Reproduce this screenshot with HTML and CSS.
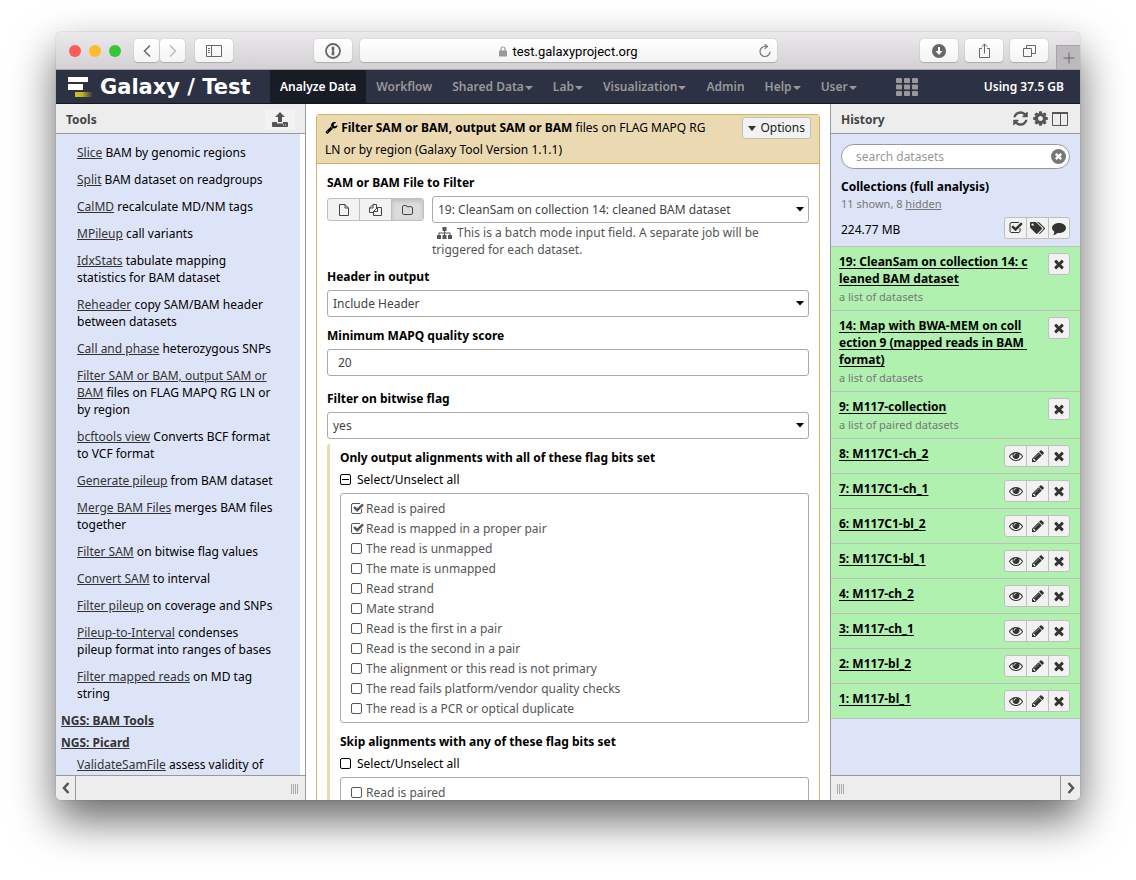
FILE: index.html
```html
<!DOCTYPE html>
<html lang="en">
<head>
<meta charset="utf-8">
<title>Galaxy / Test</title>
<link rel="stylesheet" href="styles.css">
</head>
<body>
<svg class="sprite" aria-hidden="true">
  <symbol id="times" viewBox="0 0 1792 1792"><path d="M1490 1322q0 40-28 68l-136 136q-28 28-68 28t-68-28l-294-294-294 294q-28 28-68 28t-68-28l-136-136q-28-28-28-68t28-68l294-294-294-294q-28-28-28-68t28-68l136-136q28-28 68-28t68 28l294 294 294-294q28-28 68-28t68 28l136 136q28 28 28 68t-28 68l-294 294 294 294q28 28 28 68z"/></symbol>
  <symbol id="pencil" viewBox="0 0 1792 1792"><path d="M491 1536l91-91-235-235-91 91v107h128v128h107zm523-928q0-22-22-22-10 0-17 7l-542 542q-7 7-7 17 0 22 22 22 10 0 17-7l542-542q7-7 7-17zm-54-192l416 416-832 832h-416v-416zm683 96q0 53-37 90l-166 166-416-416 166-165q36-38 90-38 53 0 91 38l235 234q37 39 37 91z"/></symbol>
  <symbol id="eye" viewBox="0 0 1792 1792"><path d="M1664 960q-152-236-381-353 61 104 61 225 0 185-131.5 316.5t-316.5 131.5-316.5-131.5-131.5-316.5q0-121 61-225-229 117-381 353 133 205 333.5 326.5t434.5 121.5 434.5-121.5 333.5-326.5zm-720-384q0-20-14-34t-34-14q-125 0-214.5 89.5t-89.5 214.5q0 20 14 34t34 14 34-14 14-34q0-86 61-147t147-61q20 0 34-14t14-34zm848 384q0 34-20 69-140 230-376.5 368.5t-499.5 138.5-499.5-139-376.5-368q-20-35-20-69t20-69q140-229 376.5-368t499.5-139 499.5 139 376.5 368q20 35 20 69z"/></symbol>
  <symbol id="cog" viewBox="0 0 1792 1792"><path d="M1152 896q0-106-75-181t-181-75-181 75-75 181 75 181 181 75 181-75 75-181zm512-109v222q0 12-8 23t-20 13l-185 28q-19 54-39 91 35 50 107 138 10 12 10 25t-9 23q-27 37-99 108t-94 71q-12 0-26-9l-138-108q-44 23-91 38-16 136-29 186-7 28-36 28h-222q-14 0-24.5-8.5t-11.5-21.5l-28-184q-49-16-90-37l-141 107q-10 9-25 9-14 0-25-11-126-114-165-168-7-10-7-23 0-12 8-23 15-21 51-66.5t54-70.5q-27-50-41-99l-183-27q-13-2-21-12.5t-8-23.5v-222q0-12 8-23t19-13l186-28q14-46 39-92-40-57-107-138-10-12-10-24 0-10 9-23 26-36 98.5-107.5t94.5-71.5q13 0 26 10l138 107q44-23 91-38 16-136 29-186 7-28 36-28h222q14 0 24.5 8.5t11.5 21.5l28 184q49 16 90 37l142-107q9-9 24-9 13 0 25 10 129 119 165 170 7 8 7 22 0 12-8 23-15 21-51 66.5t-54 70.5q26 50 41 98l183 28q13 2 21 12.5t8 23.5z"/></symbol>
  <symbol id="refresh" viewBox="0 0 1792 1792"><path d="M1639 1056q0 5-1 7-64 268-268 434.5t-478 166.5q-146 0-282.5-55t-243.5-157l-129 129q-19 19-45 19t-45-19-19-45v-448q0-26 19-45t45-19h448q26 0 45 19t19 45-19 45l-137 137q71 66 161 102t187 36q134 0 250-65t186-179q11-17 53-117 8-23 30-23h192q13 0 22.5 9.5t9.5 22.5zm25-800v448q0 26-19 45t-45 19h-448q-26 0-45-19t-19-45 19-45l138-138q-148-137-349-137-134 0-250 65t-186 179q-11 17-53 117-8 23-30 23h-199q-13 0-22.5-9.5t-9.5-22.5v-7q65-268 270-434.5t480-166.5q146 0 284 55.5t245 156.5l130-129q19-19 45-19t45 19 19 45z"/></symbol>
  <symbol id="wrench" viewBox="0 0 1792 1792"><path d="M448 1472q0-26-19-45t-45-19-45 19-19 45 19 45 45 19 45-19 19-45zm644-420l-682 682q-37 37-90 37-52 0-91-37l-106-108q-38-36-38-90 0-53 38-91l681-681q39 98 114.5 173.5t173.5 114.5zm634-435q0 39-23 106-47 134-164.5 217.5t-258.5 83.5q-185 0-316.5-131.5t-131.5-316.5 131.5-316.5 316.5-131.5q58 0 121.5 16.5t107.5 46.5q16 11 16 28t-16 28l-293 169v224l193 107q5-3 79-48.5t135.5-81 70.5-35.5q15 0 23.5 10t8.5 25z"/></symbol>
  <symbol id="check" viewBox="0 0 1792 1792"><path d="M1472 930v318q0 119-84.5 203.5t-203.5 84.5h-832q-119 0-203.5-84.5t-84.5-203.5v-832q0-119 84.5-203.5t203.5-84.5h832q63 0 117 25 15 7 18 23 3 17-9 29l-49 49q-10 10-23 10-3 0-9-2-23-6-45-6h-832q-66 0-113 47t-47 113v832q0 66 47 113t113 47h832q66 0 113-47t47-113v-254q0-13 9-22l64-64q10-10 23-10 6 0 12 3 20 8 20 29zm231-489l-814 814q-24 24-57 24t-57-24l-430-430q-24-24-24-57t24-57l110-110q24-24 57-24t57 24l263 263 647-647q24-24 57-24t57 24l110 110q24 24 24 57t-24 57z"/></symbol>
</svg>

<div class="window">
  <header class="titlebar">
    <div class="lights"><i class="light red"></i><i class="light yellow"></i><i class="light green"></i></div>
    <div class="pair">
      <button class="tb half" aria-label="Back"><svg width="12" height="14" viewBox="0 0 12 14"><path d="M9 1.500 3.500 7 9 12.500" fill="none" stroke="#666" stroke-width="1.500"/></svg></button>
      <button class="tb half" aria-label="Forward"><svg width="12" height="14" viewBox="0 0 12 14"><path d="M3 1.500 8.500 7 3 12.500" fill="none" stroke="#bbb" stroke-width="1.500"/></svg></button>
    </div>
    <button class="tb" aria-label="Sidebar"><svg width="16" height="12" viewBox="0 0 16 12" fill="none" stroke="#666"><path d="M.5.5h15v11H.5zM5.500.5v11M2 3.500h2M2 5.500h2M2 7.500h2"/></svg></button>
    <button class="tb password" aria-label="Password manager"><svg width="16" height="16" viewBox="0 0 16 16"><circle cx="8" cy="8" r="7" fill="none" stroke="#666" stroke-width="1.800"/><path d="M6.700 3.800h2.600v3.400l-.8.8.8.8v3.400H6.700V8.800l.8-.8-.8-.8z" fill="#666"/></svg></button>
    <div class="address">
      <span class="url"><svg width="8" height="11" viewBox="0 0 8 11"><path d="M2 5V3a2 2 0 0 1 4 0v2" fill="none" stroke="#999" stroke-width="1.200"/><rect y="4.500" width="8" height="6" rx=".8" fill="#999"/></svg>test.galaxyproject.org</span>
      <svg class="reload" width="14" height="14" viewBox="0 0 14 14"><path d="M12 7.500A5 5 0 1 1 7 2.500h2" fill="none" stroke="#777" stroke-width="1.200"/><path d="M6.500.2 9.500 2.500 6.500 4.900" fill="none" stroke="#777" stroke-width="1.200"/></svg>
    </div>
    <div class="tb-right">
      <button class="tb" aria-label="Downloads"><svg width="14" height="14" viewBox="0 0 14 14"><circle cx="7" cy="7" r="7" fill="#666"/><path d="M6 3h2v4h2.500L7 11 3.500 7H6z" fill="#fff"/></svg></button>
      <button class="tb" aria-label="Share"><svg width="13" height="16" viewBox="0 0 13 16" fill="none" stroke="#666"><path d="M4 5.500H1.500v9h10v-9H9M6.500 10.500V1M3.700 3.800 6.500 1l2.800 2.800"/></svg></button>
      <button class="tb" aria-label="Show tabs"><svg width="13" height="13" viewBox="0 0 13 13" fill="none" stroke="#666"><path d="M.5 4.500h8v8h-8zM3.500 4.500v-3h9v8h-4"/></svg></button>
    </div>
    <button class="newtab" aria-label="New tab"><svg width="12" height="12" viewBox="0 0 12 12"><path d="M6 .5v11M.5 6h11" stroke="#666"/></svg></button>
  </header>

  <nav class="masthead">
    <a class="brand" href="#"><svg width="25" height="20" viewBox="0 0 25 20"><defs><linearGradient id="gold"><stop offset="0" stop-color="#d8c11c"/><stop offset=".4" stop-color="#c4ae22"/><stop offset="1" stop-color="#2c3143"/></linearGradient></defs><path d="M0 0h20v5H0zM0 7h15v6H0z" fill="#fff"/><path d="M7 15h18v5H7z" fill="url(#gold)"/></svg>Galaxy / Test</a>
    <a class="item active" href="#">Analyze Data</a>
    <a class="item" href="#">Workflow</a>
    <a class="item caret" href="#">Shared Data</a>
    <a class="item caret" href="#">Lab</a>
    <a class="item caret" href="#">Visualization</a>
    <a class="item" href="#">Admin</a>
    <a class="item caret" href="#">Help</a>
    <a class="item caret" href="#">User</a>
    <a class="apps" href="#" aria-label="Applications"><svg width="22" height="18" viewBox="0 0 22 18" fill="#999"><rect width="6" height="5" rx="1"/><rect x="8" width="6" height="5" rx="1"/><rect x="16" width="6" height="5" rx="1"/><rect y="6.500" width="6" height="5" rx="1"/><rect x="8" y="6.500" width="6" height="5" rx="1"/><rect x="16" y="6.500" width="6" height="5" rx="1"/><rect y="13" width="6" height="5" rx="1"/><rect x="8" y="13" width="6" height="5" rx="1"/><rect x="16" y="13" width="6" height="5" rx="1"/></svg></a>
    <span class="quota">Using 37.5 GB</span>
  </nav>

  <div class="columns">
    <aside class="panel tools">
      <div class="panel-head"><h2>Tools</h2><button class="upload" aria-label="Upload"><svg width="16" height="15" viewBox="0 0 16 15" fill="#555"><path d="M8 0l5 5h-3v5H6V5H3z"/><path d="M0 11q0-1 1-1h4v1.500h6V10h4q1 0 1 1v3q0 1-1 1H1q-1 0-1-1z"/><path d="M11 12.500h1v1h-1zM13 12.500h1v1h-1z" fill="#eee"/></svg></button></div>
      <div class="tool-list">
        <p><a href="#">Slice</a> BAM by genomic regions</p>
        <p><a href="#">Split</a> BAM dataset on readgroups</p>
        <p><a href="#">CalMD</a> recalculate MD/NM tags</p>
        <p><a href="#">MPileup</a> call variants</p>
        <p><a href="#">IdxStats</a> tabulate mapping<br>statistics for BAM dataset</p>
        <p><a href="#">Reheader</a> copy SAM/BAM header<br>between datasets</p>
        <p><a href="#">Call and phase</a> heterozygous SNPs</p>
        <p><a href="#">Filter SAM or BAM, output SAM or<br>BAM</a> files on FLAG MAPQ RG LN or<br>by region</p>
        <p><a href="#">bcftools view</a> Converts BCF format<br>to VCF format</p>
        <p><a href="#">Generate pileup</a> from BAM dataset</p>
        <p><a href="#">Merge BAM Files</a> merges BAM files<br>together</p>
        <p><a href="#">Filter SAM</a> on bitwise flag values</p>
        <p><a href="#">Convert SAM</a> to interval</p>
        <p><a href="#">Filter pileup</a> on coverage and SNPs</p>
        <p><a href="#">Pileup-to-Interval</a> condenses<br>pileup format into ranges of bases</p>
        <p><a href="#">Filter mapped reads</a> on MD tag<br>string</p>
        <h3><a href="#">NGS: BAM Tools</a></h3>
        <h3><a href="#">NGS: Picard</a></h3>
        <p><a href="#">ValidateSamFile</a> assess validity of</p>
      </div>
      <div class="panel-foot"><button class="collapse" aria-label="Collapse tools"><svg width="8" height="12" viewBox="0 0 8 12"><path d="M6.500 1 2 6l4.500 5" fill="none" stroke="#555" stroke-width="2.500"/></svg></button><i class="grip"></i></div>
    </aside>

    <main class="center">
      <form class="tool-form">
        <div class="form-head">
          <button type="button" class="options">Options</button>
          <svg class="wrench" width="13" height="13"><use href="#wrench"/></svg>
          <b>Filter SAM or BAM, output SAM or BAM</b> files on FLAG MAPQ RG<br>LN or by region (Galaxy Tool Version 1.1.1)
        </div>
        <div class="form-body">
          <div class="field">
            <label for="input-file">SAM or BAM File to Filter</label>
            <div class="data-row">
              <div class="group sources">
                <button type="button" aria-label="Single dataset"><svg width="10" height="12" viewBox="0 0 10 12" fill="none" stroke="#444"><path d="M.5.5h5.500l3.500 3.500v7.500h-9zM6 .5V4h3.500"/></svg></button>
                <button type="button" aria-label="Multiple datasets"><svg width="13" height="12" viewBox="0 0 13 12" fill="none" stroke="#444"><path d="M4.500 8.500h-4V4L4 .5h3.500V4M4 .5V4H.5M4.500 11.500V7.500L8.500 3.500h4v8zM8.500 3.500v4h-4"/></svg></button>
                <button type="button" class="pressed" aria-label="Dataset collection"><svg width="11" height="10" viewBox="0 0 11 10" fill="none" stroke="#444"><path d="M.5 2q0-1.500 1.200-1.500h2.200q1 0 1 1.200h4.400q1.200 0 1.200 1.300v5q0 1.500-1.200 1.500H1.700Q.5 9.500.5 8z"/></svg></button>
              </div>
              <div class="data-select">
                <select id="input-file"><option>19: CleanSam on collection 14: cleaned BAM dataset</option></select>
                <p class="hint"><svg width="15" height="12" viewBox="0 0 15 12" fill="#555"><path d="M5.500 0h4v4H8v1.500h5.500V8H15v4h-4V8h1.500V6.500H8V8h1.500v4h-4V8H7V6.500H2.500V8H4v4H0V8h1.500V5.500H7V4H5.500z"/></svg>This is a batch mode input field. A separate job will be<br>triggered for each dataset.</p>
              </div>
            </div>
          </div>
          <div class="field">
            <label for="header">Header in output</label>
            <select id="header"><option>Include Header</option></select>
          </div>
          <div class="field">
            <label for="mapq">Minimum MAPQ quality score</label>
            <input type="text" id="mapq" value="20">
          </div>
          <div class="field spaced">
            <label for="bitwise">Filter on bitwise flag</label>
            <select id="bitwise"><option>yes</option></select>
          </div>
          <div class="nested">
            <div class="field">
              <h4>Only output alignments with all of these flag bits set</h4>
              <label class="all"><input type="checkbox" class="partial">Select/Unselect all</label>
              <div class="flags">
                <label><input type="checkbox" checked>Read is paired</label>
                <label><input type="checkbox" checked>Read is mapped in a proper pair</label>
                <label><input type="checkbox">The read is unmapped</label>
                <label><input type="checkbox">The mate is unmapped</label>
                <label><input type="checkbox">Read strand</label>
                <label><input type="checkbox">Mate strand</label>
                <label><input type="checkbox">Read is the first in a pair</label>
                <label><input type="checkbox">Read is the second in a pair</label>
                <label><input type="checkbox">The alignment or this read is not primary</label>
                <label><input type="checkbox">The read fails platform/vendor quality checks</label>
                <label><input type="checkbox">The read is a PCR or optical duplicate</label>
              </div>
            </div>
            <div class="field">
              <h4>Skip alignments with any of these flag bits set</h4>
              <label class="all"><input type="checkbox">Select/Unselect all</label>
              <div class="flags">
                <label><input type="checkbox">Read is paired</label>
              </div>
            </div>
          </div>
        </div>
      </form>
    </main>

    <aside class="panel history">
      <div class="panel-head"><h2>History</h2>
        <div class="head-icons">
          <button aria-label="Refresh history"><svg width="17" height="17"><use href="#refresh"/></svg></button>
          <button aria-label="History options"><svg width="17" height="17"><use href="#cog"/></svg></button>
          <button aria-label="View all histories"><svg width="16" height="14" viewBox="0 0 16 14" fill="none" stroke="#555"><path d="M.5.5h15v13H.5zM8.500 1v12"/><path d="M0 1h16" stroke-width="2"/></svg></button>
        </div>
      </div>
      <div class="history-body">
        <div class="history-info">
          <div class="search"><input type="text" placeholder="search datasets" aria-label="search datasets"><svg width="15" height="15" viewBox="0 0 15 15"><circle cx="7.500" cy="7.500" r="7.500" fill="#777"/><path d="M4.800 4.800l5.400 5.400M10.200 4.800l-5.400 5.400" stroke="#fff" stroke-width="2.400"/></svg></div>
          <h3>Collections (full analysis)</h3>
          <p class="sub">11 shown, 8 <a href="#">hidden</a></p>
          <div class="size-row"><span>224.77 MB</span>
            <div class="group">
              <button aria-label="Select datasets"><svg width="14" height="14"><use href="#check"/></svg></button>
              <button aria-label="Edit tags"><svg width="15" height="13" viewBox="0 0 15 13" fill="#333"><path fill-rule="evenodd" d="M0 1q0-1 1-1h4q1 0 1.700.7l5 5q.8.8 0 1.600l-4.200 4.200q-.8.7-1.600 0l-5.200-5.200Q0 5.600 0 4.800zM2.600 1.400a1.200 1.200 0 1 0 0 2.400 1.200 1.200 0 0 0 0-2.400z"/><path d="M7 0h1q.9 0 1.600.7l5 5q.8.8 0 1.600l-4.200 4.200q-.7.7-1.500.2l4.300-4.500q.6-.7 0-1.500z"/></svg></button>
              <button aria-label="Annotate"><svg width="14" height="13" viewBox="0 0 14 13" fill="#333"><path d="M7 1c4 0 7 2.200 7 5s-3 5-7 5l-1.500-.1Q3.700 12.700 1 13q1.400-1.500 1.300-3.200Q0 8.300 0 6c0-2.800 3-5 7-5z"/></svg></button>
            </div>
          </div>
        </div>
        <div class="dataset"><div class="text"><a href="#">19: CleanSam on collection 14: c<br>leaned BAM dataset</a><p class="sub">a list of datasets</p></div><div class="group"><button aria-label="Delete"><svg width="14" height="14"><use href="#times"/></svg></button></div></div>
        <div class="dataset"><div class="text"><a href="#">14: Map with BWA-MEM on coll<br>ection 9 (mapped reads in BAM&nbsp;<br>format)</a><p class="sub">a list of datasets</p></div><div class="group"><button aria-label="Delete"><svg width="14" height="14"><use href="#times"/></svg></button></div></div>
        <div class="dataset"><div class="text"><a href="#">9: M117-collection</a><p class="sub">a list of paired datasets</p></div><div class="group"><button aria-label="Delete"><svg width="14" height="14"><use href="#times"/></svg></button></div></div>
        <div class="dataset"><div class="text"><a href="#">8: M117C1-ch_2</a></div><div class="group"><button aria-label="View"><svg width="14" height="14"><use href="#eye"/></svg></button><button aria-label="Edit"><svg width="14" height="14"><use href="#pencil"/></svg></button><button aria-label="Delete"><svg width="14" height="14"><use href="#times"/></svg></button></div></div>
        <div class="dataset"><div class="text"><a href="#">7: M117C1-ch_1</a></div><div class="group"><button aria-label="View"><svg width="14" height="14"><use href="#eye"/></svg></button><button aria-label="Edit"><svg width="14" height="14"><use href="#pencil"/></svg></button><button aria-label="Delete"><svg width="14" height="14"><use href="#times"/></svg></button></div></div>
        <div class="dataset"><div class="text"><a href="#">6: M117C1-bl_2</a></div><div class="group"><button aria-label="View"><svg width="14" height="14"><use href="#eye"/></svg></button><button aria-label="Edit"><svg width="14" height="14"><use href="#pencil"/></svg></button><button aria-label="Delete"><svg width="14" height="14"><use href="#times"/></svg></button></div></div>
        <div class="dataset"><div class="text"><a href="#">5: M117C1-bl_1</a></div><div class="group"><button aria-label="View"><svg width="14" height="14"><use href="#eye"/></svg></button><button aria-label="Edit"><svg width="14" height="14"><use href="#pencil"/></svg></button><button aria-label="Delete"><svg width="14" height="14"><use href="#times"/></svg></button></div></div>
        <div class="dataset"><div class="text"><a href="#">4: M117-ch_2</a></div><div class="group"><button aria-label="View"><svg width="14" height="14"><use href="#eye"/></svg></button><button aria-label="Edit"><svg width="14" height="14"><use href="#pencil"/></svg></button><button aria-label="Delete"><svg width="14" height="14"><use href="#times"/></svg></button></div></div>
        <div class="dataset"><div class="text"><a href="#">3: M117-ch_1</a></div><div class="group"><button aria-label="View"><svg width="14" height="14"><use href="#eye"/></svg></button><button aria-label="Edit"><svg width="14" height="14"><use href="#pencil"/></svg></button><button aria-label="Delete"><svg width="14" height="14"><use href="#times"/></svg></button></div></div>
        <div class="dataset"><div class="text"><a href="#">2: M117-bl_2</a></div><div class="group"><button aria-label="View"><svg width="14" height="14"><use href="#eye"/></svg></button><button aria-label="Edit"><svg width="14" height="14"><use href="#pencil"/></svg></button><button aria-label="Delete"><svg width="14" height="14"><use href="#times"/></svg></button></div></div>
        <div class="dataset"><div class="text"><a href="#">1: M117-bl_1</a></div><div class="group"><button aria-label="View"><svg width="14" height="14"><use href="#eye"/></svg></button><button aria-label="Edit"><svg width="14" height="14"><use href="#pencil"/></svg></button><button aria-label="Delete"><svg width="14" height="14"><use href="#times"/></svg></button></div></div>
      </div>
      <div class="panel-foot"><i class="grip"></i><button class="collapse" aria-label="Collapse history"><svg width="8" height="12" viewBox="0 0 8 12"><path d="M1.500 1 6 6l-4.500 5" fill="none" stroke="#555" stroke-width="2.500"/></svg></button></div>
    </aside>
  </div>
</div>
</body>
</html>
```
FILE: styles.css
```css
* { box-sizing: border-box; }
body, h2, h3, h4, p { margin: 0; font-size: inherit; }
body {
  height: 100vh;
  padding: 32px 56px 80px;
  display: flex;
  overflow: hidden;
  background: #fff;
  color: #000;
  font: 12px/17px "Noto Sans", sans-serif;
}
button, input, select { font: inherit; color: inherit; margin: 0; }
button { padding: 0; border: 0; background: none; display: flex; align-items: center; justify-content: center; }
svg { flex: none; }
.sprite { display: none; }

.window {
  flex: 1;
  min-width: 0;
  display: flex;
  flex-direction: column;
  overflow: hidden;
  border-radius: 5px;
  background: #fff;
  box-shadow: 0 0 1px rgba(0, 0, 0, .5), 0 20px 44px rgba(0, 0, 0, .6);
}

/* Browser toolbar */
.titlebar {
  flex: none;
  height: 38px;
  display: flex;
  align-items: center;
  padding-left: 13px;
  gap: 8px;
  background: linear-gradient(#ebe9eb, #d3d1d3);
  border-bottom: 1px solid #a6a4a6;
}
.lights { display: flex; gap: 8px; margin-right: 5px; }
.light { width: 12px; height: 12px; border-radius: 50%; }
.red { background: #fc5b57; }
.yellow { background: #fdbc2e; }
.green { background: #34c63b; }
.pair, .tb-right { display: flex; gap: 1px; }
.pair { margin-right: 2px; }
.tb-right { gap: 7px; margin-left: 135px; }
.tb {
  width: 38px;
  height: 23px;
  border-radius: 4px;
  background: linear-gradient(#fff, #f4f4f4);
  box-shadow: 0 0 1px #999, 0 1px 1px #b0b0b0;
}
.half { width: 25px; }
.password { margin-left: 73px; }
.address {
  flex: 1;
  height: 23px;
  display: flex;
  align-items: center;
  padding: 0 5px 0 19px;
  border-radius: 4px;
  background: linear-gradient(#fff, #f4f4f4);
  box-shadow: 0 0 1px #999, 0 1px 1px #b0b0b0;
  font: 13px/17px Roboto, sans-serif;
}
.url { flex: 1; display: flex; align-items: center; justify-content: center; gap: 5px; margin-top: 1px; }
.newtab { align-self: flex-end; width: 24px; height: 24px; background: #bcbabc; border: 1px solid #a6a4a6; border-width: 1px 0 0 1px; }

/* Masthead */
.masthead {
  flex: none;
  height: 34px;
  display: flex;
  align-items: stretch;
  background: #2c3143;
  border-bottom: 1px solid #15171f;
  color: #999;
  font-weight: 600;
}
.masthead a { color: inherit; text-decoration: none; display: flex; align-items: center; }
.masthead .brand { width: 214px; padding-left: 12px; gap: 7px; color: #fff; font: bold 21px/24px "DejaVu Sans", sans-serif; white-space: nowrap; }
.masthead .item { padding: 0 10px; white-space: nowrap; }
.masthead .active { background: #191b25; color: #fff; }
.caret::after { content: ""; margin: 2px 0 0 1px; border: 4px solid transparent; border-top-color: #999; border-bottom: 0; }
.masthead .apps { margin-left: 29px; }
.quota { margin-left: auto; padding-right: 16px; align-self: center; color: #fff; }

/* Columns */
.columns { flex: 1; min-height: 0; display: grid; grid-template-columns: 250px minmax(0, 1fr) 250px; }
.panel { display: flex; flex-direction: column; min-height: 0; }
.tools { border-right: 1px solid #999; }
.history { border-left: 1px solid #999; }
.panel-head {
  flex: none;
  height: 30px;
  display: flex;
  align-items: center;
  justify-content: space-between;
  padding: 2px 10px 0;
  background: #ededed;
  border-bottom: 1px solid #999;
  color: #444;
}
.head-icons { display: flex; gap: 3px; margin: 0 2px 2px 0; fill: #555; }
.upload { width: 30px; height: 21px; border-radius: 3px; background: #f2f2f2; }
.panel-foot { flex: none; height: 25px; display: flex; align-items: center; justify-content: space-between; background: #ededed; border-top: 1px solid #999; }
.collapse { width: 20px; height: 24px; border: 0 solid #999; }
.tools .collapse { border-right-width: 1px; }
.history .collapse { border-left-width: 1px; }
.grip { width: 8px; height: 10px; margin: 2px 6px 0; background: repeating-linear-gradient(90deg, #aaa 0 1px, transparent 1px 2px); }

.tool-list { flex: 1; min-height: 0; overflow: hidden; margin-right: 5px; padding: 10px 0 0 5px; background: #dee4f7; white-space: nowrap; }
.tool-list a { color: #333; }
.tool-list p { padding-left: 16px; margin-bottom: 10px; }
.tool-list h3 { margin-bottom: 5px; }

/* Tool form */
.center { min-height: 0; overflow: hidden; padding: 10px 10px 0; }
.tool-form { border: 1px solid #d6b161; border-radius: 3px; }
.form-head { padding: 2px 8px; background: #ebd9b2; border-bottom: 1px solid #d6b161; line-height: 22px; }
.wrench { vertical-align: -2px; }
.options { float: right; height: 22px; padding: 0 5px; gap: 4px; background: #f2f2f2; border: 1px solid #bfbfbf; border-radius: 3px; color: #222; }
.options::before { content: ""; border: 4px solid transparent; border-top: 5px solid #333; border-bottom: 0; }
.form-body { padding: 10px; }
.field { margin-bottom: 10px; }
.field > label, h4 { display: block; margin-bottom: 5px; font-weight: bold; }
.spaced { margin: 14px 0 5px; }
select, input[type=text] {
  display: block;
  width: 100%;
  height: 27px;
  padding: 0 20px 0 5px;
  border: 1px solid #aaa;
  border-radius: 3px;
  background-color: #fff;
  color: #444;
}
select { appearance: none; background: #fff url("data:image/svg+xml,%3Csvg xmlns='http://www.w3.org/2000/svg' width='8' height='5'%3E%3Cpath d='M0 0h8L4 4.500z'/%3E%3C/svg%3E") no-repeat right 4px center; }
input[type=text] { padding-left: 10px; }
.data-row { display: flex; gap: 8px; }
.data-select { flex: 1; min-width: 0; }
.hint { margin-top: 1px; color: #555; }
.hint svg { margin: 0 5px; vertical-align: -2px; }
.group { display: flex; flex: none; border: 1px solid #bfbfbf; border-radius: 3px; background: #f2f2f2; overflow: hidden; }
.group button { width: 21px; height: 20px; fill: #333; }
.group button + button { width: 22px; border-left: 1px solid #bfbfbf; }
.group button + button:last-child { width: 21px; }
.group button:only-child { width: 20px; }
.sources { align-self: flex-start; margin-top: 2px; }
.sources button { width: 31px; height: 21px; }
.sources button + button, .sources button + button:last-child { width: 32px; }
.sources .pressed { background: #dcdcdc; box-shadow: inset 0 2px 4px rgba(0, 0, 0, .15); }

.nested { padding: 5px 0 0 10px; border-left: 3px solid #ebd9b2; border-radius: 3px 0 0; }
.field > .all { display: flex; align-items: center; gap: 6px; font-weight: normal; }
.flags { padding: 4px 10px; border: 1px solid #aaa; border-radius: 3px; color: #555; }
.flags label { display: flex; align-items: center; gap: 4px; height: 20px; }
input[type=checkbox] { appearance: none; width: 11px; height: 11px; border: 1px solid currentColor; border-radius: 2px; background: center no-repeat; }
.flags input[type=checkbox]:checked { width: 13px; height: 13px; margin-right: -2px; border: 0; background-image: url("data:image/svg+xml,%3Csvg xmlns='http://www.w3.org/2000/svg' width='13' height='13'%3E%3Cpath d='M10.500 7v3q0 1.500-1.500 1.500H2Q.5 11.500.5 10V3Q.5 1.500 2 1.500h7' fill='none' stroke='%23555'/%3E%3Cpath d='M3 5l3.200 3.200L12 2.400' fill='none' stroke='%23555' stroke-width='2.400'/%3E%3C/svg%3E"); }
.partial { background-image: linear-gradient(#000, #000) !important; background-size: 7px 1px !important; }

/* History */
.history-body { flex: 1; min-height: 0; overflow: hidden; background: #dee4f7; }
.history-info { padding: 10px 10px 7px; border-bottom: 1px solid #bfbfbf; }
.search { display: flex; align-items: center; height: 25px; padding-right: 3px; background: #fff; border: 1px solid #999; border-radius: 13px; }
.search input[type=text] { flex: 1; min-width: 0; height: 23px; padding: 0 0 0 14px; border: 0; background: none; }
.search input::placeholder { color: #999; opacity: 1; }
.history-info h3 { margin-top: 9px; }
.sub { color: #777; font-size: 11px; }
.sub a { color: inherit; }
.size-row { display: flex; align-items: center; justify-content: space-between; margin-top: 5px; }
.size-row > span { padding-top: 2px; }
.dataset { display: flex; align-items: flex-start; justify-content: space-between; padding: 6px 10px 5px 8px; background: #b0f1b0; border-bottom: 1px solid #bfbfbf; }
.dataset .text > a { color: #000; font-weight: bold; white-space: nowrap; text-underline-offset: 2px; }
.dataset .sub { margin-top: 1px; }
.dataset .group { margin-bottom: 1px; }
```
